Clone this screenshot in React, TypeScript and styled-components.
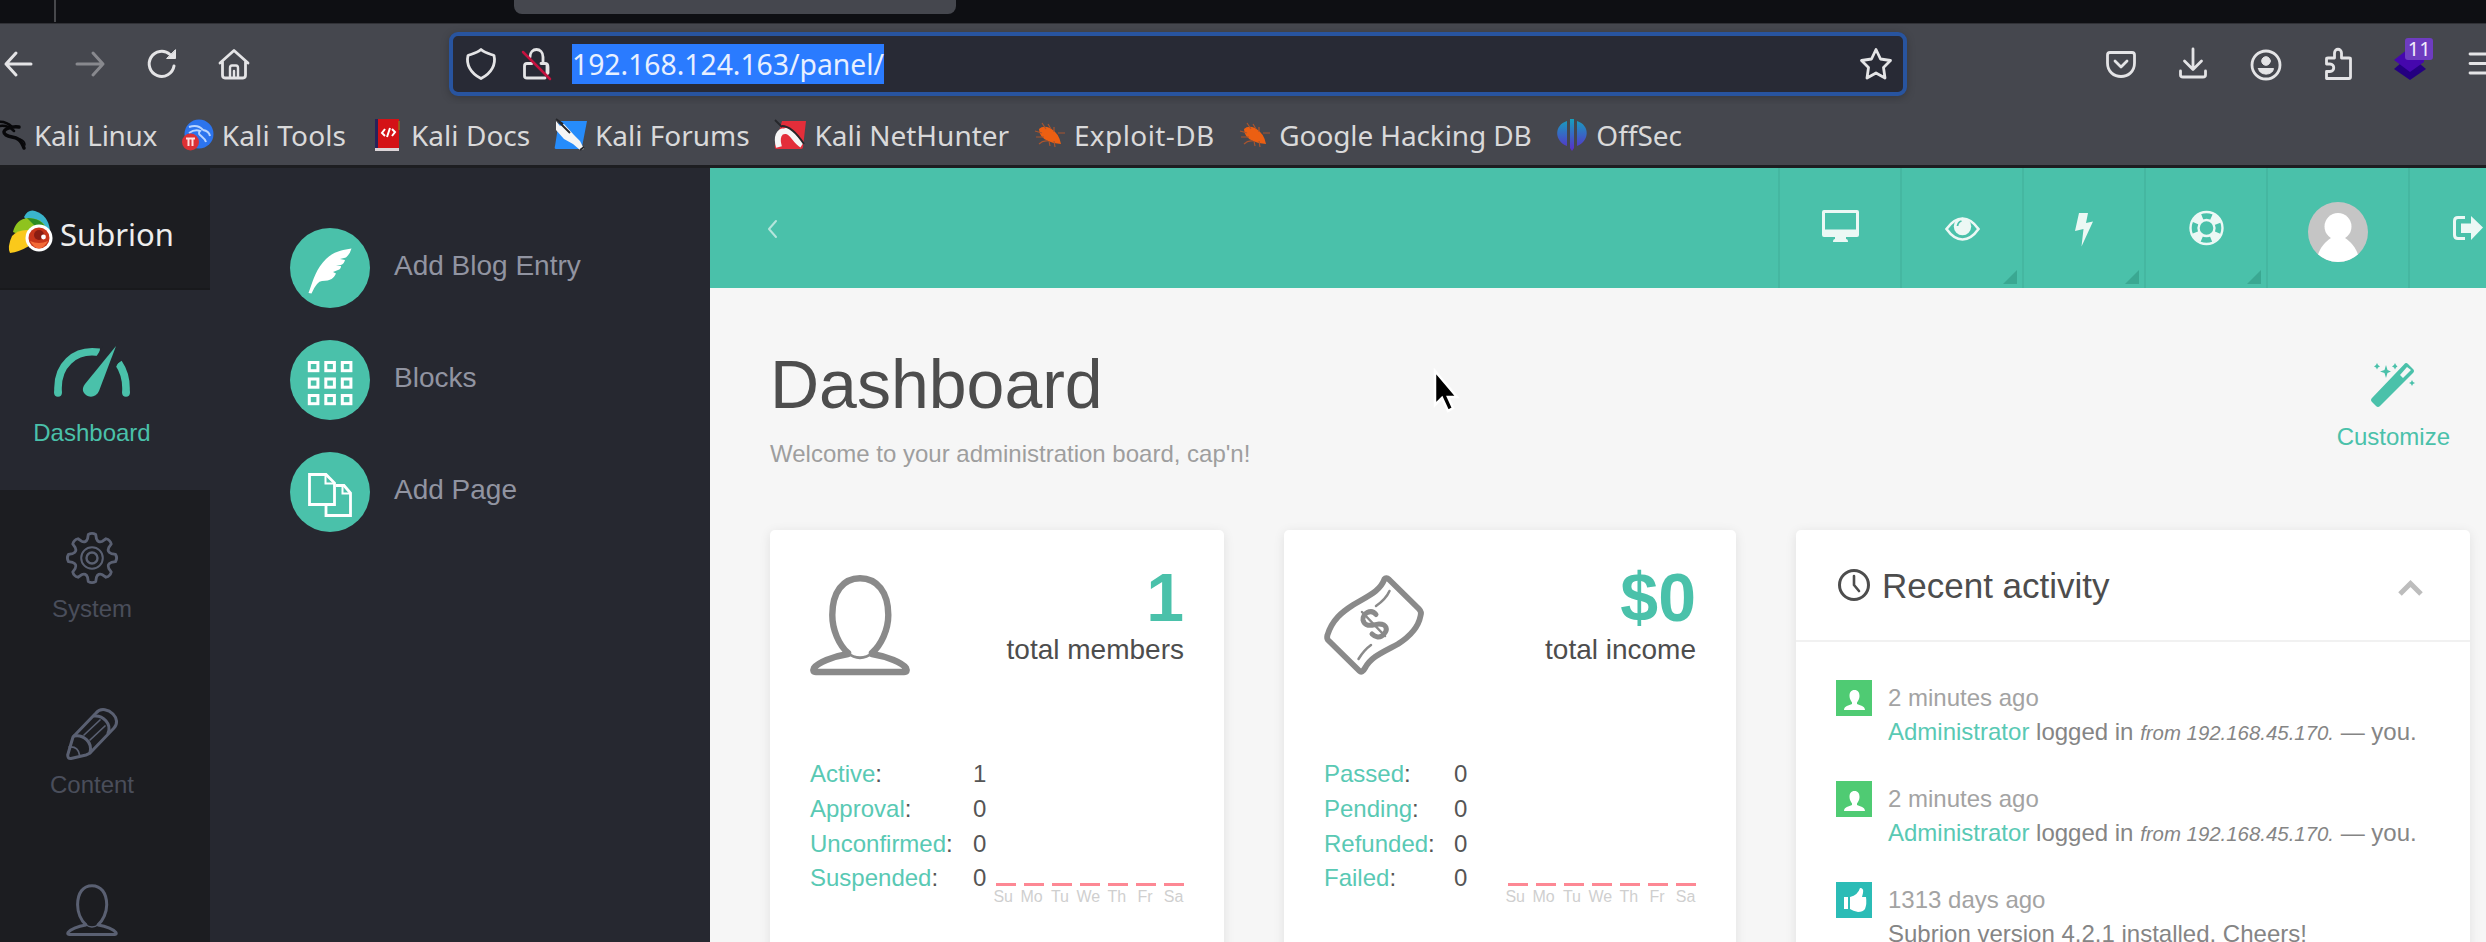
import React from 'react';
import styled, { createGlobalStyle } from 'styled-components';

const GlobalStyle = createGlobalStyle`
  * { box-sizing: border-box; }
  body { margin: 0; background: #f6f6f6; overflow: hidden; }
  svg { display: block; flex: none; overflow: visible; }
`;

const teal = '#4ac1aa';

const Window = styled.div`
  width: 2486px;
  height: 942px;
  overflow: hidden;
  display: flex;
  flex-direction: column;
  position: relative;
  font-family: 'Liberation Sans', Arial, sans-serif;
`;

/* ---------- browser chrome ---------- */

const TabStrip = styled.div`
  height: 24px;
  flex: none;
  display: flex;
  align-items: flex-start;
  padding-left: 54px;
  background: #0e0f13;
  border-bottom: 1px solid #303136;
`;
const TabDivider = styled.div`
  width: 2px;
  height: 22px;
  background: #47484c;
`;
const ActiveTab = styled.div`
  width: 442px;
  height: 14px;
  margin-left: 458px;
  border-radius: 0 0 8px 8px;
  background: #45474e;
`;
const NavBar = styled.div`
  height: 80px;
  flex: none;
  display: flex;
  padding: 8px 0 0 3px;
  background: #45474e;
  color: #e4e4e6;
`;
const NavButtons = styled.div`
  width: 446px;
  flex: none;
  height: 64px;
  display: flex;
  align-items: center;
  gap: 40px;
`;
const AddressBar = styled.div`
  width: 1458px;
  flex: none;
  height: 64px;
  display: flex;
  align-items: center;
  padding: 0 11px 0 12px;
  border: 4px solid #28549f;
  border-radius: 9px;
  background: #282a35;
  box-shadow: 0 2px 8px rgba(0, 0, 0, 0.22);
`;
const LockSlot = styled.div`
  margin: 0 20px 0 23px;
`;
const SelectedUrl = styled.span`
  height: 40px;
  line-height: 41px;
  width: 312px;
  white-space: nowrap;
  background: #2a7bff;
  color: #e8f0ff;
  font-family: 'Noto Sans', sans-serif;
  font-size: 28.3px;
`;
const StarSlot = styled.div`
  margin-left: auto;
`;
const Extensions = styled.div`
  height: 64px;
  flex: none;
  margin-left: 198px;
  display: flex;
  align-items: center;
  gap: 40.3px;
`;
const ExtensionButton = styled.div`
  position: relative;
  width: 32px;
`;
const ExtensionBadge = styled.span`
  position: absolute;
  left: 11px;
  top: -10px;
  width: 28px;
  height: 22px;
  border-radius: 3px;
  background: #6e3cc0;
  color: #f2ecfb;
  font: 20px/22px 'Noto Sans', sans-serif;
  text-align: center;
`;
const BookmarkBar = styled.div`
  height: 64px;
  flex: none;
  display: flex;
  align-items: center;
  gap: 24.7px;
  background: #45474e;
  border-bottom: 3px solid #1d1e21;
`;
const Bookmark = styled.div<{ $track: number }>`
  display: flex;
  align-items: center;
  gap: 8px;
  color: #d9d9da;
  font: 28px/38px 'Noto Sans', sans-serif;
  letter-spacing: ${p => p.$track}px;
  white-space: nowrap;
  &:first-child { margin-left: -6px; }
`;

/* ---------- panel ---------- */

const Panel = styled.div`
  flex: 1;
  min-height: 0;
  display: flex;
`;
const Sidebar = styled.nav`
  width: 210px;
  flex: none;
  background: #1c1d21;
`;
const Brand = styled.div`
  height: 122px;
  display: flex;
  align-items: center;
  gap: 7px;
  padding: 8px 0 0 8px;
  border-bottom: 2px solid #18191c;
  color: #ededed;
  font: 31px/40px 'Noto Sans', sans-serif;
  span { margin-top: 4px; }
`;
const MenuItem = styled.div<{ $active?: boolean }>`
  height: ${p => (p.$active ? 200 : 176)}px;
  padding: ${p => (p.$active ? '56px' : '42px')} 26px 0 0;
  display: flex;
  flex-direction: column;
  align-items: center;
  gap: ${p => (p.$active ? 18 : 8)}px;
  background: ${p => (p.$active ? '#262830' : 'transparent')};
  color: ${p => (p.$active ? teal : '#4a4e5b')};
  font-size: 24px;
  line-height: 34px;
`;
const SubPanel = styled.div`
  width: 500px;
  flex: none;
  display: flex;
  flex-direction: column;
  gap: 32px;
  padding: 60px 0 0 80px;
  background: #262830;
`;
const Shortcut = styled.div`
  height: 80px;
  display: flex;
  align-items: center;
  gap: 24px;
  color: #9194a1;
  font-size: 28px;
  line-height: 32px;
  span { margin-top: -5px; }
`;
const Main = styled.main`
  flex: 1;
  min-width: 0;
  overflow: hidden;
  display: flex;
  flex-direction: column;
  background: #f6f6f6;
`;
const TopBar = styled.header`
  height: 120px;
  flex: none;
  display: flex;
  background: ${teal};
  color: #ecf8f5;
`;
const Collapse = styled.div`
  width: 1068px;
  flex: none;
  padding: 53px 0 0 56px;
  color: #b5e5dc;
`;
const TopCell = styled.div<{ $w: number; $top: number }>`
  position: relative;
  width: ${p => p.$w}px;
  flex: none;
  border-left: 2px solid #45b7a1;
  padding-top: ${p => p.$top}px;
  display: flex;
  justify-content: center;
  align-items: flex-start;
`;
const Corner = styled.i`
  position: absolute;
  right: 5px;
  bottom: 4px;
  border-left: 14px solid transparent;
  border-bottom: 14px solid #3aa892;
`;
const PageHead = styled.div`
  height: 242px;
  flex: none;
  display: flex;
  justify-content: space-between;
  padding: 0 36px 0 60px;
`;
const Title = styled.h1`
  margin: 56px 0 0;
  font-size: 68px;
  line-height: 80px;
  font-weight: 400;
  color: #4d4d4d;
`;
const Subtitle = styled.p`
  margin: 13px 0 0;
  font-size: 24px;
  line-height: 34px;
  color: #9e9e9e;
`;
const Customize = styled.div`
  margin-top: 75px;
  display: flex;
  flex-direction: column;
  align-items: center;
  gap: 13px;
  color: ${teal};
  font-size: 24px;
  line-height: 34px;
`;
const Cards = styled.div`
  flex: 1;
  display: flex;
  gap: 60px;
  padding-left: 60px;
`;
const Card = styled.section<{ $w: number; $pad?: number }>`
  width: ${p => p.$w}px;
  height: 460px;
  flex: none;
  padding: ${p => p.$pad || 0}px;
  border-radius: 5px;
  background: #fff;
  box-shadow: 0 2px 12px rgba(0, 0, 0, 0.09);
`;
const StatHead = styled.div`
  height: 180px;
  display: flex;
  justify-content: space-between;
  padding-top: 5px;
  color: #8a8a8a;
`;
const Total = styled.div`
  text-align: right;
  margin-top: -12px;
  color: #4d4d4d;
  font-size: 28px;
  line-height: 32px;
  strong {
    display: block;
    margin-bottom: 3px;
    font-size: 68px;
    line-height: 68px;
    color: ${teal};
  }
`;
const StatBody = styled.div`
  display: flex;
  justify-content: space-between;
  align-items: flex-end;
  margin-top: 7px;
`;
const StatTable = styled.div<{ $label: number }>`
  display: grid;
  grid-template-columns: ${p => p.$label}px 14px;
  grid-auto-rows: 34.8px;
  color: #555;
  font-size: 24px;
  line-height: 34px;
  white-space: nowrap;
  a { color: #59c9b4; }
`;
const Chart = styled.div`
  width: 192px;
  margin-bottom: -12px;
`;
const Bars = styled.div`
  display: flex;
  justify-content: space-between;
  padding-left: 4px;
  i { width: 20px; height: 3px; background: #fd8894; }
`;
const Days = styled.div`
  display: grid;
  grid-template-columns: repeat(7, 28.4px);
  width: 199px;
  margin-left: -3px;
  color: #cfcfcf;
  font-size: 16px;
  line-height: 22px;
  text-align: center;
`;
const ActivityHead = styled.div`
  height: 112px;
  display: flex;
  align-items: center;
  padding: 0 47px 0 42px;
  border-bottom: 2px solid #f1f1f1;
  color: #4d4d4d;
  font-size: 35px;
  line-height: 40px;
  span { margin: 2px auto 0 12px; }
`;
const ActivityList = styled.div`
  padding: 38px 0 0 40px;
  display: flex;
  flex-direction: column;
`;
const Activity = styled.div`
  height: 101px;
  display: flex;
  gap: 16px;
  color: #858585;
  font-size: 24px;
  line-height: 34px;
  white-space: nowrap;
  time { display: block; padding-top: 1px; color: #a3a3a3; }
  a { color: #59c9b4; }
  em { font-size: 20.4px; }
`;
const ActivityIcon = styled.div<{ $c: string }>`
  width: 36px;
  height: 36px;
  background: ${p => p.$c};
`;
const Pointer = styled.div`
  position: absolute;
  left: 1433px;
  top: 369px;
`;

/* ---------- drawings ---------- */

type SvgP = { w: number; h: number; sw?: number; children: React.ReactNode; vb?: string };
const Line = ({ w, h, sw = 3, children, vb }: SvgP) => (
  <svg width={w} height={h} viewBox={vb || `0 0 ${w} ${h}`} fill="none" stroke="currentColor" strokeWidth={sw} strokeLinecap="round" strokeLinejoin="round">{children}</svg>
);
const Solid = ({ w, h, children, vb }: SvgP) => (
  <svg width={w} height={h} viewBox={vb || `0 0 ${w} ${h}`} fill="currentColor">{children}</svg>
);

const Person = ({ size, sw, color }: { size: number; sw: number; color: string }) => (
  <svg width={size} height={size} viewBox="0 0 100 100" fill="none" stroke={color} strokeWidth={sw} strokeLinecap="round" strokeLinejoin="round">
    <path d="M38 78C29 70 22.3 55 22.3 40C22.3 17 33 3.2 50 3.2S78.300 17 78.300 40C78.300 55 71 70 62 78" />
    <path d="M37 77.500Q50 88 63 77.500" strokeWidth={sw * 0.45} />
    <path d="M38 79C22 81.500 8 88 4 93Q2 97 6 97H94Q98 97 96 93C92 88 78 81.500 62 79" />
  </svg>
);

const gearPath = (() => {
  const pt = (r: number, deg: number) => {
    const a = ((deg - 90) * Math.PI) / 180;
    return `${(26 + r * Math.cos(a)).toFixed(2)} ${(26 + r * Math.sin(a)).toFixed(2)}`;
  };
  let d = '';
  for (let k = 0; k < 8; k++) {
    const a = k * 45;
    d += `${k ? 'L' : 'M'}${pt(23.8, a - 9)}Q${pt(25.8, a)} ${pt(23.8, a + 9)}L${pt(19.8, a + 13)}Q${pt(16, a + 22.5)} ${pt(19.8, a + 32)}`;
  }
  return d + 'Z';
})();

const Disc = ({ children }: { children: React.ReactNode }) => (
  <svg width="80" height="80" viewBox="0 0 80 80"><circle cx="40" cy="40" r="40" fill={teal} />{children}</svg>
);

const KaliDragon = () => (
  <svg width="32" height="32" viewBox="0 0 32 32" fill="none" stroke="#08080a" strokeLinecap="round">
    <path d="M4 3Q12 2 18 8M6 7Q14 6 20 12" strokeWidth="2.500" />
    <path d="M25 8C14 7 6 12 12 16S25 15 30 29" strokeWidth="3.500" /><path d="M26 20Q31 22 31 26" strokeWidth="1.500" />
  </svg>
);
const KaliTools = () => (
  <svg width="32" height="32" viewBox="0 0 32 32">
    <circle cx="17" cy="15" r="14.500" fill="#2c74ee" />
    <path d="M7 8Q16 5 21 11M7 14Q13 10 18 12C14 16 22 17 24 23M21 11Q27 12 28 17" fill="none" stroke="#b9d5ff" strokeWidth="2" />
    <circle cx="8.500" cy="23" r="8.500" fill="#dc3034" /><path d="M4 19.500H13M6.500 20V27M10.500 20V27" stroke="#ffdede" strokeWidth="2" />
  </svg>
);
const KaliDocs = () => (
  <svg width="32" height="34" viewBox="0 0 32 34">
    <path d="M4 1H8V30H4Z" fill="#27235a" /><path d="M7 1H28V30H7Z" fill="#d41216" /><path d="M4 30H28V33H4Z" fill="#dcd5d8" /><path d="M28 3V12" stroke="#9a6a1c" strokeWidth="1.500" />
    <path d="M14 11L11 15L14 18M21 11L24 14L21 18M19 10L16 19" fill="none" stroke="#fff" strokeWidth="2" />
  </svg>
);
const KaliForums = () => (
  <svg width="32" height="32" viewBox="0 0 32 32">
    <path d="M4 2H32L27 28Q26 30 24 30H1Q-1 30 0 27Z" fill="#268cfb" />
    <path d="M1 2L5 7L9 5L19 16L25 22L29 30L25 31L18 25L9 20L1 11Z" fill="#f5f5f5" /><path d="M1 0L8 5M4 3L15 14M25 31L29 28" stroke="#26272b" strokeWidth="1.800" />
  </svg>
);
const KaliNetHunter = () => (
  <svg width="32" height="32" viewBox="0 0 32 32">
    <path d="M8 2H32L29 28Q29 30 27 30H3Q0 30 1 26Z" fill="#e32e3a" />
    <path d="M5 28C2 18 5 12 11 12C18 11 20 21 28 26" fill="none" stroke="#f6f6f6" strokeWidth="6" /><path d="M1 1L8 8M8 7Q18 7 30 25" fill="none" stroke="#26272b" strokeWidth="1.800" />
  </svg>
);
const Bug = () => (
  <svg width="32" height="32" viewBox="0 0 32 32">
    <path d="M5 10Q9 6 16 9Q25 14 27 25Q20 25 14 22Q5 18 5 10Z" fill="#ec5f12" />
    <path d="M8 4L12 10M14 5L17 10M20 8L20 13M24 14L31 14M1 12L8 14M2 18L10 18M5 25Q9 21 14 22M15 22L16 27M20 22L21 28" fill="none" stroke="#a8552f" strokeWidth="1.200" />
  </svg>
);
const OffSec = () => (
  <svg width="32" height="32" viewBox="0 0 32 32">
    <defs><linearGradient id="offsec" x1="0" y1="0" x2="0" y2="1" gradientUnits="objectBoundingBox"><stop offset="0" stopColor="#16a0be" /><stop offset="1" stopColor="#5b2bc9" /></linearGradient></defs>
    <path d="M11 2V27C-2 22-2 6 11 2ZM21 2V27C34 22 34 6 21 2ZM14 0H18V29L16 32L14 29Z" fill="url(#offsec)" />
  </svg>
);

const bookmarks: [string, () => React.JSX.Element, number][] = [
  ['Kali Linux', KaliDragon, -0.3], ['Kali Tools', KaliTools, 0.15], ['Kali Docs', KaliDocs, 0.05], ['Kali Forums', KaliForums, 0],
  ['Kali NetHunter', KaliNetHunter, 0], ['Exploit-DB', Bug, 0.4], ['Google Hacking DB', Bug, -0.12], ['OffSec', OffSec, 0],
];

const days = ['Su', 'Mo', 'Tu', 'We', 'Th', 'Fr', 'Sa'];

type StatProps = { w: number; label: number; icon: React.ReactNode; total: string; caption: string; rows: [string, number][] };
const StatCard = ({ w, label, icon, total, caption, rows }: StatProps) => (
  <Card $w={w} $pad={40}>
    <StatHead>{icon}<Total><strong>{total}</strong>{caption}</Total></StatHead>
    <StatBody>
      <StatTable $label={label}>
        {rows.map(([k, v]) => <React.Fragment key={k}><span><a>{k}</a>:</span><span>{v}</span></React.Fragment>)}
      </StatTable>
      <Chart>
        <Bars>{days.map(d => <i key={d} />)}</Bars>
        <Days>{days.map(d => <span key={d}>{d}</span>)}</Days>
      </Chart>
    </StatBody>
  </Card>
);

const Login = () => (
  <Activity>
    <ActivityIcon $c="#4fcb73">
      <svg width="36" height="36" viewBox="0 0 36 36" fill="#fff"><path d="M18.500 10C15 10 13.500 12.500 13.500 16C13.500 19 15 21 16 22.500V24C13 25.500 8 26 8 30H29C29 26 24 25.500 21 24V22.500C22 21 23.500 19 23.500 16C23.500 12.500 22 10 18.500 10Z" /></svg>
    </ActivityIcon>
    <div><time>2 minutes ago</time><a>Administrator</a> logged in <em>from 192.168.45.170.</em> — you.</div>
  </Activity>
);

export default function App() {
  return (
    <Window>
      <GlobalStyle />
      <TabStrip><TabDivider /><ActiveTab /></TabStrip>
      <NavBar>
        <NavButtons>
          <Line w={32} h={32}><path d="M3 16H28M13 5L3 16L13 27" /></Line>
          <svg width="32" height="32" viewBox="0 0 32 32" fill="none" stroke="#88898e" strokeWidth="3" strokeLinecap="round" strokeLinejoin="round"><path d="M2 16H28M18 5L28 16L18 27" /></svg>
          <Line w={32} h={32}><path d="M27 18A12.500 12.500 0 1 1 23 6.500" /><path d="M28.500 2V10.500H20Z" fill="currentColor" strokeWidth="1" /></Line>
          <Line w={30} h={32} sw={2.8} vb="1 0 30 32"><path d="M2 15L16 2.500L30 15M4.500 14V27Q4.500 30 7 30H25Q27.500 30 27.500 27V14" /><path d="M12 29.500V20Q12 17.500 14 17.500H18Q20 17.500 20 20V29.500M16 23V29" strokeWidth="2.400" /></Line>
        </NavButtons>
        <AddressBar>
          <Line w={32} h={32} sw={2.8}><path d="M16 1.500C12 5 7 6 3 7.500C1 16 5 25 16 30.500C27 25 31 16 29 7.500C25 6 20 5 16 1.500Z" /></Line>
          <LockSlot>
            <Line w={32} h={32} sw={2.8}>
              <path d="M10 9C10 -1 23 -1 23 9V15M27 18V26" /><path d="M25 30H7Q4.500 30 4.500 28V18Q4.500 15.500 7 15.500H12" />
              <path d="M21 15.500H25Q28 15.500 28 19V25" /><path d="M3 4L30 31" stroke="#c5123f" strokeWidth="2.500" />
            </Line>
          </LockSlot>
          <SelectedUrl>192.168.124.163/panel/</SelectedUrl>
          <StarSlot><Line w={32} h={32} sw={2.8}><path d="M16 1.500L20.500 11L30.500 12.500L23.500 19.500L25 30L16 25L7 30L8.500 19.500L1.500 12.500L11.500 11Z" /></Line></StarSlot>
        </AddressBar>
        <Extensions>
          <Line w={32} h={32} sw={2.8}><path d="M5 4.500H27Q29.500 4.500 29.500 7V15C29.500 33 2.500 33 2.500 15V7Q2.500 4.500 5 4.500Z" /><path d="M10 13L16 19L22 13" /></Line>
          <Line w={32} h={32} sw={2.8}><path d="M16 1V21M7.500 13L16 21.500L24.500 13M3.500 23V27Q3.500 29 6 29H26Q28.500 29 28.500 27V23" /></Line>
          <Line w={32} h={32} sw={2.8}><circle cx="16" cy="17" r="14" /><circle cx="16" cy="13" r="4.300" fill="currentColor" strokeWidth="1" /><path d="M8.500 20.500H23.500C23 28 9 28 8.500 20.500Z" fill="currentColor" strokeWidth="1" /></Line>
          <Line w={32} h={32} sw={2.8}><path d="M4.500 30.500V23.500H8C13 23.500 13 16 8 16H4.500V11Q4.500 10 6 10H12.500V5C12.500 0 19.500 0 19.500 5V10H27Q28.500 10 28.500 11V29Q28.500 30.500 27 30.500Z" /></Line>
          <ExtensionButton>
            <svg width="32" height="32" viewBox="0 0 32 32"><path d="M0 21L7 15L25 15L32 21L16 32Z" fill="#240080" /><path d="M0 12L14 1H30V14L16 24Z" fill="#4507ad" /></svg>
            <ExtensionBadge>11</ExtensionBadge>
          </ExtensionButton>
          <Line w={32} h={32} sw={2.8}><path d="M4 6H28M4 15.500H28M4 25H28" /></Line>
        </Extensions>
      </NavBar>
      <BookmarkBar>
        {bookmarks.map(([name, Icon, track]) => <Bookmark key={name} $track={track}><Icon />{name}</Bookmark>)}
      </BookmarkBar>
      <Panel>
        <Sidebar>
          <Brand>
            <svg width="45" height="44" viewBox="0 0 45 44">
              <path d="M16 7Q20 -1 27 1Q40 5 42 20L30 24Z" fill="#3ab5cc" />
              <path d="M5 22Q8 9 20 8Q34 8 38 18L24 30Z" fill="#8fc31e" /><path d="M19 8Q34 8 38 19L28 17Z" fill="#2c8c22" />
              <path d="M4 26Q10 19 22 20L21 36Q11 42 2 43Q-1 37 4 26Z" fill="#fac91b" />
              <circle cx="31" cy="28" r="13.500" fill="#fff" /><circle cx="31" cy="28" r="10.500" fill="#c7351a" /><path d="M22 31Q31 46 40 31Q31 35 22 31Z" fill="#f36a37" /><circle cx="31" cy="25" r="5" fill="#8a1d12" /><circle cx="35.500" cy="27" r="2.400" fill="#fff" />
            </svg>
            <span>Subrion</span>
          </Brand>
          <MenuItem $active>
            <svg width="76" height="52" viewBox="0 0 76 52" fill="none" stroke={teal} strokeWidth="7.600">
              <path d="M4 47.500V42C4 18 21 5.800 38 5.800Q42 5.800 45.500 6.300" /><path d="M72 47.500V42Q72 28 64.500 17" />
              <path d="M4 46.500V47M72 46.500V47" strokeLinecap="round" />
              <path d="M49 0L42 11L49 11ZM60 25L66 13L58 13Z" fill="#262830" stroke="none" />
              <path d="M62 0L45 45C42.500 51 36 52 32 49S28 42 31 38Z" fill={teal} stroke="none" />
            </svg>
            Dashboard
          </MenuItem>
          <MenuItem>
            <svg width="52" height="52" viewBox="0 0 52 52" fill="none" stroke="#5a6072" strokeWidth="2.800" strokeLinejoin="round"><path d={gearPath} /><circle cx="26" cy="26" r="10.800" strokeWidth="2" /><circle cx="26" cy="26" r="5.500" strokeWidth="2.400" /></svg>
            <span>System</span>
          </MenuItem>
          <MenuItem>
            <svg width="52" height="52" viewBox="0 0 52 52" fill="none" stroke="#5a6072" strokeWidth="3" strokeLinecap="round" strokeLinejoin="round">
              <path d="M1.700 47L7 29L30 5C35 -1 43 2 47 6S52 16 48 20L25 44Q23 46 20 47L5 50.500Q1.700 51 1.700 47Z" />
              <path d="M8 28C17 26 27 34 24 45M28 8C37 7 46 16 42 25" /><path d="M3 39Q12 38 13.500 47M18 27L34 12M24 32L39 18" strokeWidth="1.700" />
            </svg>
            <span>Content</span>
          </MenuItem>
          <MenuItem><Person size={52} sw={5.8} color="#5a6072" /></MenuItem>
        </Sidebar>
        <SubPanel>
          <Shortcut>
            <Disc><path d="M18.500 65C24 50 26 41 36 31C44 23 53 22 61.500 20.500Q60 26 56 29.500L50 31L55 32Q54 36 51 37L46 38H51Q51 41 48 42L43 44L46 45.500C44 50 41 53 32 53Q27 53 21.500 65.500Z" fill="#fff" /></Disc>
            <span>Add Blog Entry</span>
          </Shortcut>
          <Shortcut>
            <Disc>{[19.5, 36, 52.5].map(x => [22.5, 39, 55.5].map(y => <rect key={`${x}-${y}`} x={x - 0.2} y={y} width="8.600" height="8.200" fill="none" stroke="#fff" strokeWidth="3" />))}</Disc>
            <span>Blocks</span>
          </Shortcut>
          <Shortcut>
            <Disc><g fill="none" stroke="#fff" strokeWidth="2.800"><path d="M46 33.500H54L60.500 41V63.500H36V54" /><path d="M52.500 34V41.500H60.500" strokeWidth="2" /><path d="M19.500 22.500H36L44.500 31V52.500H19.500Z" /><path d="M35.500 22.500V31.500H44.500" strokeWidth="2" /></g></Disc>
            <span>Add Page</span>
          </Shortcut>
        </SubPanel>
        <Main>
          <TopBar>
            <Collapse><Line w={12} h={16} sw={2}><path d="M10 0L3 8L10 16" /></Line></Collapse>
            <TopCell $w={122} $top={42}><Solid w={37} h={33}><path fillRule="evenodd" d="M2 0H35Q37 0 37 2V25Q37 27 35 27H24V29Q26 29 26 32H11Q11 29 13 29V27H2Q0 27 0 25V2Q0 0 2 0ZM3 3V19.500H34V3Z" /></Solid></TopCell>
            <TopCell $w={122} $top={49}>
              <svg width="35" height="24" viewBox="0 0 35 24"><path d="M1.500 12Q9 1.500 17.500 1.500T33.500 12Q26 22.500 17.500 22.500T1.500 12Z" fill="none" stroke="currentColor" strokeWidth="2.600" /><circle cx="17.500" cy="9.500" r="8.700" fill="currentColor" /><path d="M12.500 9Q13 5 16.500 4" fill="none" stroke={teal} strokeWidth="1.800" /></svg>
              <Corner />
            </TopCell>
            <TopCell $w={122} $top={45}><Solid w={18} h={34}><path d="M4 0H13L11 10L18 8.500L6.500 33.500L8.500 16L0 18Z" /></Solid><Corner /></TopCell>
            <TopCell $w={122} $top={43}>
              <svg width="35" height="34" viewBox="0 0 35 34" fill="none" stroke="currentColor"><circle cx="17.500" cy="17" r="16" strokeWidth="2.400" /><circle cx="17.500" cy="17" r="8" strokeWidth="2.400" /><circle cx="17.500" cy="17" r="12" strokeWidth="7" strokeDasharray="9.400 9.450" strokeDashoffset="-4.700" /></svg>
              <Corner />
            </TopCell>
            <TopCell $w={142} $top={34}>
              <svg width="60" height="60" viewBox="0 0 60 60"><defs><clipPath id="avatar"><circle cx="30" cy="30" r="30" /></clipPath></defs><g clipPath="url(#avatar)"><rect width="60" height="60" fill="#c5c5c5" /><circle cx="30" cy="24.500" r="13.500" fill="#fff" /><path d="M9 60C9 48 17 40 23 36H37C43 40 51 48 51 60Z" fill="#fff" /></g></svg>
            </TopCell>
            <TopCell $w={122} $top={48}>
              <Solid w={34} h={24}><path d="M12 1.500H5Q1.500 1.500 1.500 5V19Q1.500 22.500 5 22.500H12" fill="none" stroke="currentColor" strokeWidth="3" /><path d="M8 7.500H18V0L30 11.500L18 24V17H8Z" /></Solid>
            </TopCell>
          </TopBar>
          <PageHead>
            <div><Title>Dashboard</Title><Subtitle>Welcome to your administration board, cap'n!</Subtitle></div>
            <Customize>
              <svg width="44" height="44" viewBox="0 0 44 44" fill="currentColor"><path fillRule="evenodd" d="M1 35L33 1.500Q35 -1 37 1L42 6Q44 8 42 10L9 43Q7 45 5 43L1 39Q-1 37 1 35ZM29 12L32 15L40 7L36 4Z" /><path d="M15 2L16.500 7L20 8.500L16.500 10L15 15L13.500 10L9 8.500L13.500 7ZM6 0L7 2L9 3.500L7 4.500L6 6.500L5 4.500L3 3.500L5 2ZM24 0L25 2L26.500 3.500L25 4.500L24 6.500L23 4.500L21 3.500L23 2ZM41 17L42 19L44 20L42 21L41 23L40 21L38 20L40 19Z" /></svg>
              Customize
            </Customize>
          </PageHead>
          <Cards>
            <StatCard w={454} label={163} total="1" caption="total members" icon={<Person size={100} sw={6.4} color="#8a8a8a" />}
              rows={[['Active', 1], ['Approval', 0], ['Unconfirmed', 0], ['Suspended', 0]]} />
            <StatCard w={452} label={130} total="$0" caption="total income"
              icon={<Line w={100} h={100} sw={5.8}>
                <path d="M60.500 4Q62 2 65 4.500L95 34Q98 37 96.500 41C94 54 85 62 74 69C57 78 47 82 41 93Q38 98.500 35.500 96L4 65Q2.500 63 3.500 60C8 45 18 37 29 30C46 20 56 16 60.500 4Z" />
                <path d="M52 39.500C47 33 38 39 39 45C41 54 51 49 55 49C63 49 64 55 60 59C56 64 51 62 48 59" strokeWidth="5" /><path d="M38 37L61 61M52 31Q62 24 65.500 16M34.500 84Q40 75 47 70" strokeWidth="2.500" />
              </Line>}
              rows={[['Passed', 0], ['Pending', 0], ['Refunded', 0], ['Failed', 0]]} />
            <Card $w={674}>
              <ActivityHead>
                <Line w={32} h={32} sw={3}><circle cx="16" cy="16" r="14.500" /><path d="M16 7V16L21 22" strokeWidth="2.600" /></Line>
                <span>Recent activity</span>
                <svg width="25" height="16" viewBox="0 0 25 16" fill="none" stroke="#bdbdbd" strokeWidth="5"><path d="M2 17L12.500 6.500L23 17" /></svg>
              </ActivityHead>
              <ActivityList>
                <Login />
                <Login />
                <Activity>
                  <ActivityIcon $c="#2bbcb6">
                    <svg width="36" height="36" viewBox="0 0 36 36" fill="#fff"><path d="M8 15H12V27H8ZM14 15Q22 13 24 6Q28 6 27 11L26 15H30Q31 22 29 27Q27 30 22 30Q17 29 14 27Z" /></svg>
                  </ActivityIcon>
                  <div><time>1313 days ago</time>Subrion version 4.2.1 installed. Cheers!</div>
                </Activity>
              </ActivityList>
            </Card>
          </Cards>
        </Main>
      </Panel>
      <Pointer>
        <svg width="28" height="44" viewBox="0 0 28 44"><path d="M2 2V36L9 29L15 42L20 39L15 28H24Z" fill="#000" stroke="#fff" strokeWidth="2.500" /></svg>
      </Pointer>
    </Window>
  );
}
